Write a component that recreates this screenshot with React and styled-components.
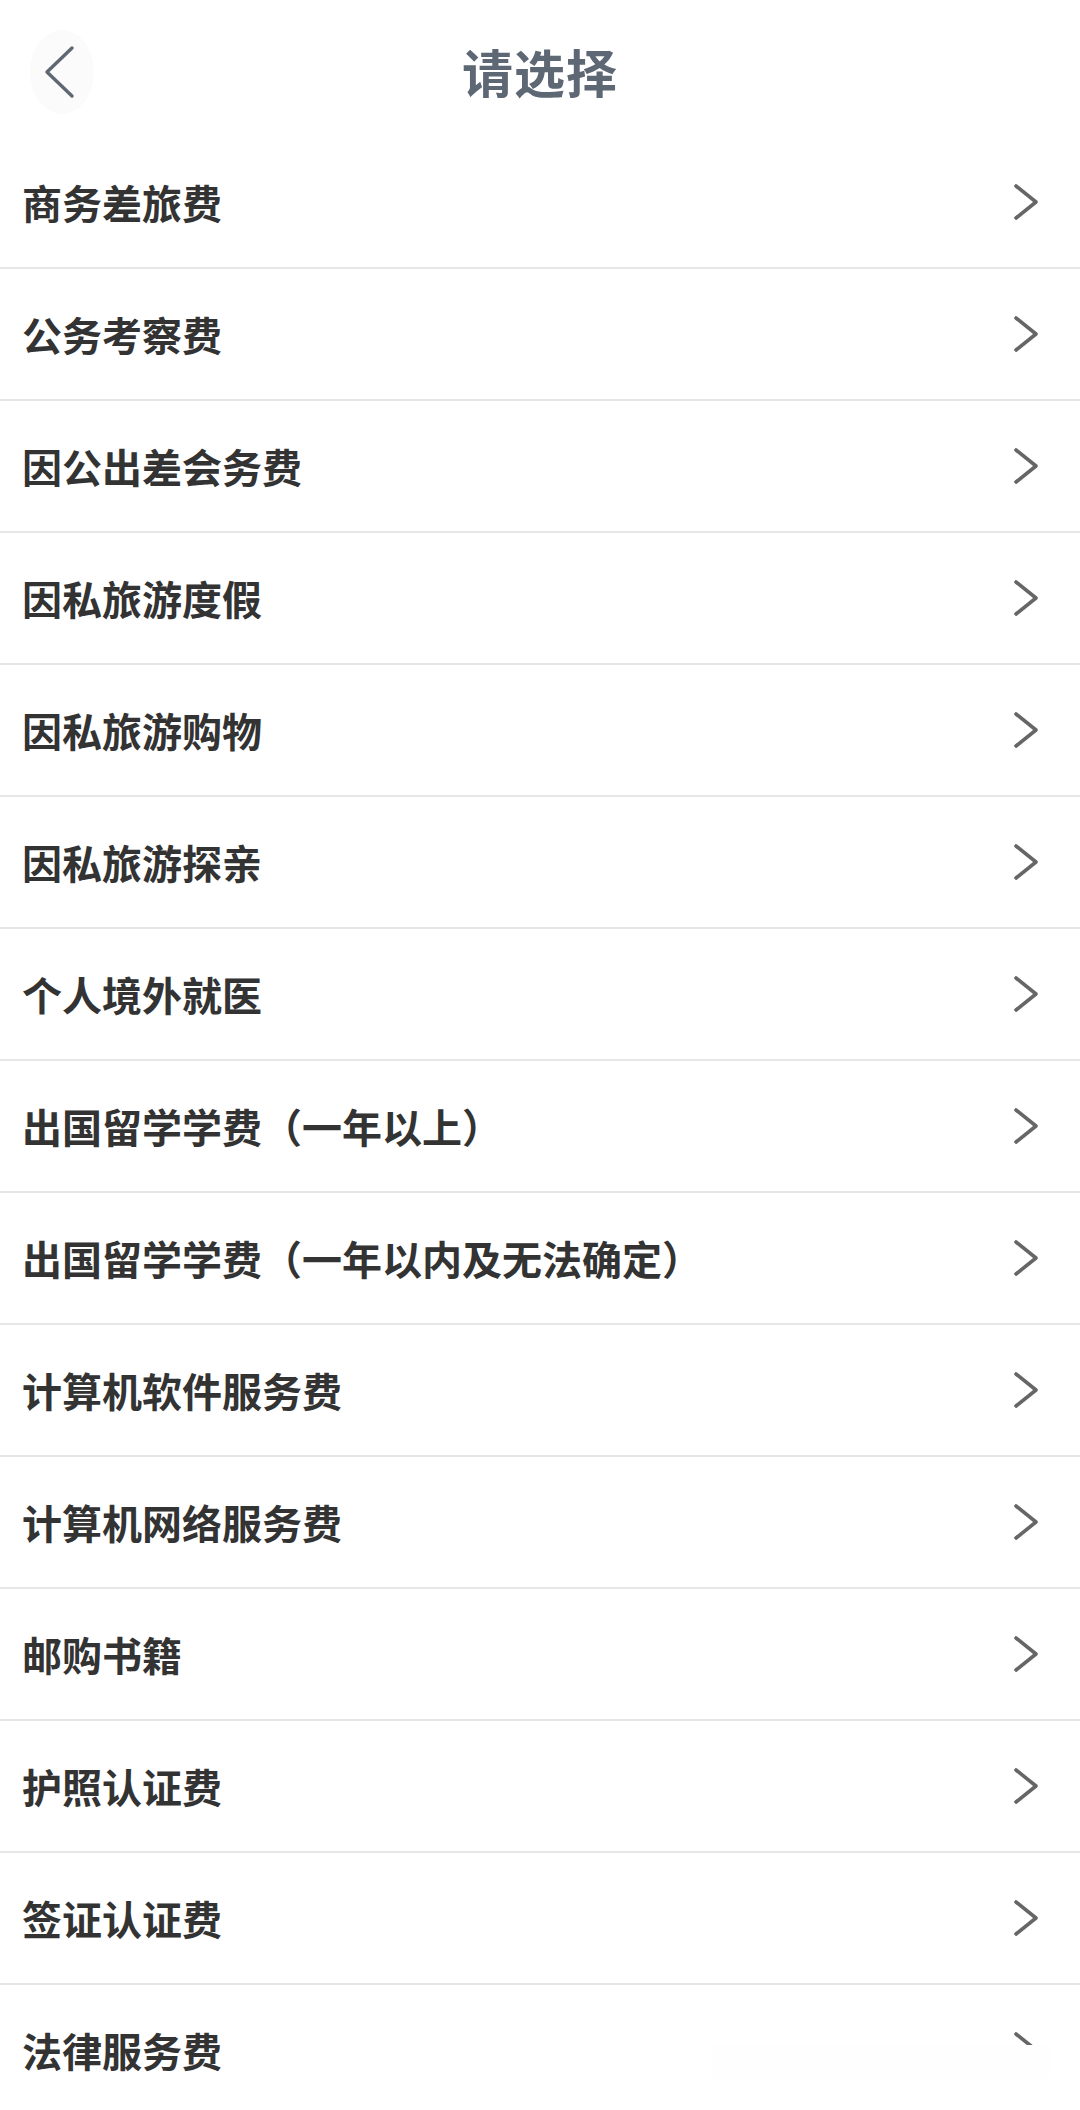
import React from "react";
import styled, { createGlobalStyle } from "styled-components";

// Estilos globais da página
const GlobalStyle = createGlobalStyle`
  html, body {
    margin: 0;
    padding: 0;
    background: #fff;
    overflow: hidden;
  }
  body {
    font-family: "Noto Sans CJK SC", "Noto Sans", sans-serif;
  }
`;

const Page = styled.div`
  position: relative;
  width: 1080px;
  height: 2110px;
  overflow: hidden;
  background: #fff;
`;

// Barra de navegação superior
const Header = styled.header`
  display: grid;
  grid-template-columns: 1fr auto 1fr;
  align-items: center;
  height: 137px;
  box-sizing: border-box;
  padding-top: 6px;
`;

const BackButton = styled.div`
  width: 64px;
  height: 84px;
  margin-left: 30px;
  border-radius: 50%;
  background: #fbfbfb;
  display: flex;
  align-items: center;
  justify-content: center;
  padding-right: 4px;
  box-sizing: border-box;
`;

const Title = styled.h1`
  margin: 0;
  font-size: 51px;
  font-weight: 700;
  color: #5e6874;
  line-height: 1;
  letter-spacing: 1px;
`;

const List = styled.ul`
  list-style: none;
  margin: 0;
  padding: 0;
`;

const Row = styled.li`
  display: flex;
  align-items: center;
  justify-content: space-between;
  height: 132px;
  box-sizing: border-box;
  padding: 0 40px 0 22px;
  border-bottom: 2px solid #e6e6e6;
`;

const Label = styled.span`
  font-size: 40px;
  font-weight: 700;
  color: #333;
  line-height: 1;
`;

// Caixa flutuante quase branca sobre a última seta
const Overlay = styled.div`
  position: absolute;
  left: 712px;
  top: 2045px;
  width: 338px;
  height: 34px;
  background: #fefefe;
  border-radius: 4px;
`;

const BackIcon = () => (
  <svg width="34" height="56" viewBox="0 0 34 56">
    <polyline
      points="29,4 4,28 29,52"
      fill="none"
      stroke="#5e6874"
      strokeWidth="3.4"
      strokeLinecap="round"
      strokeLinejoin="round"
    />
  </svg>
);

const Chevron = () => (
  <svg width="28" height="40" viewBox="0 0 28 40">
    <polyline
      points="4,4 24,20 4,36"
      fill="none"
      stroke="#666"
      strokeWidth="3.6"
      strokeLinecap="round"
      strokeLinejoin="round"
    />
  </svg>
);

const items = [
  "商务差旅费",
  "公务考察费",
  "因公出差会务费",
  "因私旅游度假",
  "因私旅游购物",
  "因私旅游探亲",
  "个人境外就医",
  "出国留学学费（一年以上）",
  "出国留学学费（一年以内及无法确定）",
  "计算机软件服务费",
  "计算机网络服务费",
  "邮购书籍",
  "护照认证费",
  "签证认证费",
  "法律服务费",
];

const App = () => {
  return (
    <Page>
      <GlobalStyle />
      <Header>
        <BackButton>
          <BackIcon />
        </BackButton>
        <Title>请选择</Title>
        <div />
      </Header>
      <List>
        {items.map((item, i) => (
          <Row key={i}>
            <Label>{item}</Label>
            <Chevron />
          </Row>
        ))}
      </List>
      <Overlay />
    </Page>
  );
};

export default App;
